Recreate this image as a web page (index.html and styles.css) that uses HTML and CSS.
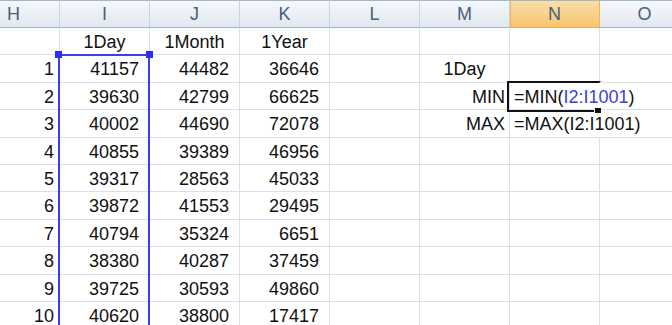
FILE: index.html
```html
<!DOCTYPE html>
<html lang="en">
<head>
  <meta charset="UTF-8">
  <title>Sheet1</title>
  <link rel="stylesheet" href="styles.css">
</head>
<body>
  <div class="sheet">
    <!-- column headers -->
    <div class="hd first">H</div>
    <div class="hd">I</div>
    <div class="hd">J</div>
    <div class="hd">K</div>
    <div class="hd">L</div>
    <div class="hd">M</div>
    <div class="hd on">N</div>
    <div class="hd">O</div>

    <div class="c"></div><div class="c ctr">1Day</div><div class="c ctr">1Month</div><div class="c ctr">1Year</div><div class="c"></div><div class="c"></div><div class="c"></div><div class="c"></div>
    <div class="c idx">1</div><div class="c num">41157</div><div class="c num">44482</div><div class="c num">36646</div><div class="c"></div><div class="c ctr">1Day</div><div class="c"></div><div class="c"></div>
    <div class="c idx">2</div><div class="c num">39630</div><div class="c num">42799</div><div class="c num">66625</div><div class="c"></div><div class="c lbl">MIN</div><div class="c fx">=MIN(<span class="ref">I2:I1001</span>)</div><div class="c"></div>
    <div class="c idx">3</div><div class="c num">40002</div><div class="c num">44690</div><div class="c num">72078</div><div class="c"></div><div class="c lbl">MAX</div><div class="c fx">=MAX(I2:I1001)</div><div class="c"></div>
    <div class="c idx">4</div><div class="c num">40855</div><div class="c num">39389</div><div class="c num">46956</div><div class="c"></div><div class="c"></div><div class="c"></div><div class="c"></div>
    <div class="c idx">5</div><div class="c num">39317</div><div class="c num">28563</div><div class="c num">45033</div><div class="c"></div><div class="c"></div><div class="c"></div><div class="c"></div>
    <div class="c idx">6</div><div class="c num">39872</div><div class="c num">41553</div><div class="c num">29495</div><div class="c"></div><div class="c"></div><div class="c"></div><div class="c"></div>
    <div class="c idx">7</div><div class="c num">40794</div><div class="c num">35324</div><div class="c num">6651</div><div class="c"></div><div class="c"></div><div class="c"></div><div class="c"></div>
    <div class="c idx">8</div><div class="c num">38380</div><div class="c num">40287</div><div class="c num">37459</div><div class="c"></div><div class="c"></div><div class="c"></div><div class="c"></div>
    <div class="c idx">9</div><div class="c num">39725</div><div class="c num">30593</div><div class="c num">49860</div><div class="c"></div><div class="c"></div><div class="c"></div><div class="c"></div>
    <div class="c idx">10</div><div class="c num">40620</div><div class="c num">38800</div><div class="c num">17417</div><div class="c"></div><div class="c"></div><div class="c"></div><div class="c"></div>

    <!-- range highlight of I2:I1001 -->
    <div class="range">
      <span class="knob left"></span>
      <span class="knob right"></span>
    </div>

    <!-- active cell N3 -->
    <div class="active"><span class="handle"></span></div>
  </div>
</body>
</html>
```

FILE: styles.css
```css
body {
  margin: 0;
  overflow: hidden;
  background: #fff;
  font-family: 'Liberation Sans', Arial, sans-serif;
  font-size: 18px;
  color: #111;
}
.sheet {
  position: relative;
  display: grid;
  grid-template-columns: 60px repeat(7, 90px);
  grid-template-rows: 28px repeat(11, 27.4px);
  width: 690px;
  height: 325px;
  overflow: hidden;
}
.hd {
  box-sizing: border-box;
  background: linear-gradient(#f5f8fb, #e2e8f0);
  border-top: 1px solid #a3b8cf;
  border-bottom: 1px solid #9db3cc;
  border-right: 1px solid #c9d5e3;
  color: #4a5f7e;
  text-align: center;
  line-height: 27px;
}
.hd.first {
  text-align: left;
  padding-left: 7px;
}
.hd.on {
  background: linear-gradient(#fadfa9, #f6c46f);
  border-bottom-color: #f0a94a;
  border-right-color: #f2b359;
  box-shadow: inset 1px 0 0 #f2b359;
}
.c {
  box-sizing: border-box;
  border-right: 1px solid #dadfe9;
  border-bottom: 1px solid #dadfe9;
  padding-top: 2px;
  line-height: 24px;
  white-space: nowrap;
  overflow: hidden;
}
.ctr {
  text-align: center;
}
.num {
  text-align: right;
  padding-right: 10px;
}
.idx {
  text-align: right;
  padding-right: 5px;
}
.lbl {
  text-align: right;
  padding-right: 4px;
}
.fx {
  overflow: visible;
  border-right: none;
  padding-left: 4px;
}
.ref {
  color: #3d3de0;
}
.range {
  position: absolute;
  left: 58px;
  top: 54px;
  width: 92px;
  bottom: -4px;
  box-sizing: border-box;
  border: 2px solid #3c3cf6;
}
.knob {
  position: absolute;
  top: -5px;
  width: 7px;
  height: 7px;
  background: #2e2ef0;
}
.knob.left {
  left: -5px;
}
.knob.right {
  right: -5px;
}
.active {
  position: absolute;
  left: 507px;
  top: 81px;
  width: 94px;
  height: 31px;
  box-sizing: border-box;
  border: 2px solid #111;
  border-right-color: transparent;
}
.handle {
  position: absolute;
  right: -2px;
  bottom: -3px;
  width: 6px;
  height: 5px;
  background: #111;
  border-top: 1px solid #fff;
  border-left: 1px solid #fff;
}
```
